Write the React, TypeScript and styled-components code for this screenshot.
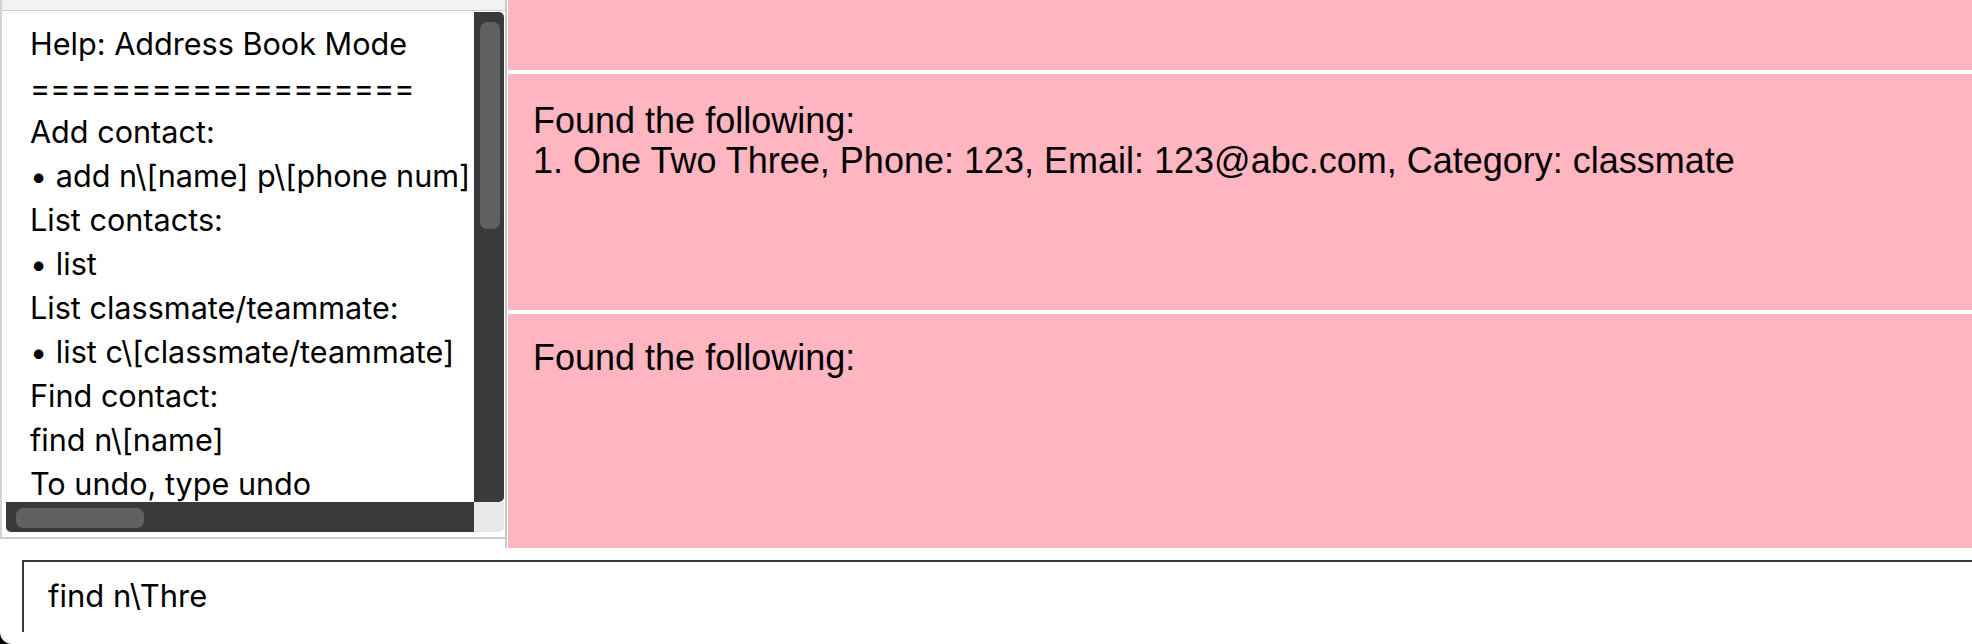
import React from "react";
import styled, { createGlobalStyle } from "styled-components";

const Global = createGlobalStyle`
  html, body { margin: 0; padding: 0; background: #000; }
  #root { width: 1972px; height: 644px; }
`;

const Window = styled.div`
  width: 1972px;
  height: 644px;
  background: #fff;
  border-bottom-left-radius: 12px;
  overflow: hidden;
  display: flex;
  flex-direction: column;
`;

const MainRow = styled.div`
  display: flex;
  height: 548px;
  flex: none;
`;

const HelpPanel = styled.div`
  flex: none;
  width: 503px;
  height: 537px;
  border-left: 2px solid #d3d3d3;
  border-bottom: 2px solid #cdcdcd;
  background: #fff;
  display: flex;
  flex-direction: column;
`;

const PanelHeader = styled.div`
  height: 10px;
  background: #f2f2f2;
  border-bottom: 1px solid #cbcbcb;
`;

const ScrollPane = styled.div`
  margin: 1px 1px 0 4px;
  width: 498px;
  height: 520px;
  display: grid;
  grid-template-columns: 468px 30px;
  grid-template-rows: 490px 30px;
`;

const Viewport = styled.div`
  overflow: hidden;
  padding: 10px 0 0 24px;
  box-shadow: inset 0 5px 4px -4px rgba(0, 0, 0, 0.08);
  font-family: Inter, "Noto Sans", sans-serif;
  font-size: 30.6px;
  line-height: 44px;
  color: #000;
  white-space: pre;
`;

const HelpLine = styled.div``;

const VTrack = styled.div`
  background: #3a3a3a;
  border-radius: 0 5px 5px 0;
  padding: 10px 4px 0 6px;
`;

const VThumb = styled.div`
  height: 207px;
  background: #606060;
  border-radius: 7px;
`;

const HTrack = styled.div`
  background: #3a3a3a;
  border-radius: 0 0 0 5px;
  padding: 6px 0 0 10px;
`;

const HThumb = styled.div`
  width: 128px;
  height: 20px;
  background: #606060;
  border-radius: 7px;
`;

const Corner = styled.div`
  background: #e8e8e8;
  border-radius: 0 0 5px 0;
`;

const Divider = styled.div`
  flex: none;
  width: 2px;
  background: #cacaca;
`;

const Results = styled.div`
  flex: 1;
  margin-left: 1px;
  display: flex;
  flex-direction: column;
  gap: 4px;
  background: #fff;
`;

const ResultCell = styled.div<{ $h?: number; $pt?: number }>`
  flex: ${(p) => (p.$h ? `0 0 ${p.$h}px` : "1")};
  background: #ffb6c1;
  padding: ${(p) => p.$pt ?? 24}px 25px 0;
  box-sizing: border-box;
  font-family: "Liberation Sans", Arial, sans-serif;
  font-size: 36px;
  line-height: 40px;
  color: #000;
  white-space: pre;
  overflow: hidden;
`;

const CommandBox = styled.div`
  margin: 12px 0 0 22px;
  height: 72px;
  border-top: 2px solid #3a3a3a;
  border-left: 2px solid #3a3a3a;
  padding: 12px 24px 0;
  box-sizing: border-box;
  font-family: Inter, "Noto Sans", sans-serif;
  font-size: 31px;
  line-height: 44px;
  color: #000;
`;

const helpLines = [
  "Help: Address Book Mode",
  "===================",
  "Add contact:",
  "• add n\\[name] p\\[phone num]",
  "List contacts:",
  "• list",
  "List classmate/teammate:",
  "• list c\\[classmate/teammate]",
  "Find contact:",
  "find n\\[name]",
  "To undo, type undo",
];

export default function App() {
  return (
    <>
      <Global />
      <Window>
        <MainRow>
          <HelpPanel>
            <PanelHeader />
            <ScrollPane>
              <Viewport>
                {helpLines.map((l, i) => (
                  <HelpLine key={i}>{l}</HelpLine>
                ))}
              </Viewport>
              <VTrack>
                <VThumb />
              </VTrack>
              <HTrack>
                <HThumb />
              </HTrack>
              <Corner />
            </ScrollPane>
          </HelpPanel>
          <Divider />
          <Results>
            <ResultCell $h={70} />
            <ResultCell $h={236} $pt={27}>
              {"Found the following:\n1. One Two Three, Phone: 123, Email: 123@abc.com, Category: classmate"}
            </ResultCell>
            <ResultCell>{"Found the following:"}</ResultCell>
          </Results>
        </MainRow>
        <CommandBox>find n\Thre</CommandBox>
      </Window>
    </>
  );
}
